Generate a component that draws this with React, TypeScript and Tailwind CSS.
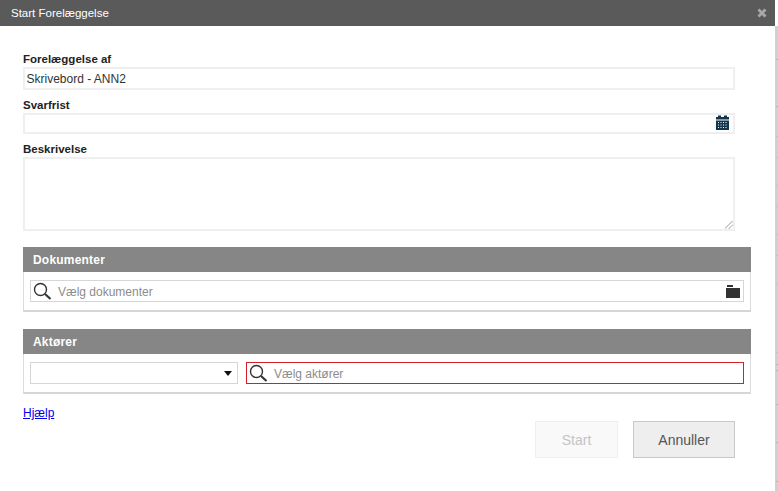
const TICKS: [number, boolean][] = [
  [59, true], [106, true], [136, false], [157, false], [185, false], [206, false], [234, false], [255, false],
  [283, false], [352, false], [364, true], [370, true], [404, true], [442, true], [481, true],
];

export default function App() {
  const font = "font-['Liberation_Sans',Arial,sans-serif]";
  const Search = () => (
    <svg width="19" height="19" viewBox="0 0 19 19" fill="none" className="shrink-0">
      <circle cx="7.500" cy="7.500" r="6" stroke="#333" strokeWidth="1.400" />
      <path d="M12 12l5.500 5" stroke="#333" strokeWidth="2.200" />
    </svg>
  );
  return (
    <div className={`flex h-[491px] w-[778px] overflow-hidden bg-white ${font}`}>
      <div className="flex w-[775px] flex-col">
        <div className="flex h-[26px] items-center justify-between bg-[#5a5a5a] pl-[11px] pr-[8px] text-[11.5px] text-white">
          <span className="mt-[1px]">Start Forelæggelse</span>
          <svg width="10" height="10" viewBox="0 0 10 10"><path d="M1.500 1.500l7 7M8.500 1.500l-7 7" stroke="#a8a8a8" strokeWidth="2.800" /></svg>
        </div>
        <div className="flex flex-col pl-[23px] pt-[24px]">
          <div className="flex h-[17px] items-center pt-[2px] text-[11.5px] font-bold leading-none text-[#222]">Forelæggelse af</div>
          <div className="flex h-[23px] w-[712px] items-center border-2 border-[#efefef] pl-[1.500px] text-[12px] text-[#333]">Skrivebord - ANN2</div>
          <div className="mt-[6px] flex h-[17px] items-center pt-[2px] text-[11.5px] font-bold leading-none text-[#222]">Svarfrist</div>
          <div className="flex h-[21px] w-[712px] items-center justify-end border-2 border-[#efefef] pr-[4px]">
            <svg width="13" height="15" viewBox="0 0 13 15" className="mt-[-2px]">
              <path d="M0 2h2V0.500h3V2h3V0.500h3V2h2v2.500H0z" fill="#12344d" />
              <path fillRule="evenodd" d="M0 5.500h13V15H0zM2 7v1h1V7zm2.500 0v1h1V7zm2.500 0v1h1V7zm2.500 0v1h1V7zM2 9.500v1h1v-1zm2.500 0v1h1v-1zm2.500 0v1h1v-1zm2.500 0v1h1v-1zM2 12v1h1v-1zm2.500 0v1h1v-1zm2.500 0v1h1v-1zm2.500 0v1h1v-1z" fill="#12344d" />
            </svg>
          </div>
          <div className="mt-[6px] flex h-[17px] items-center pt-[2px] text-[11.5px] font-bold leading-none text-[#222]">Beskrivelse</div>
          <div className="relative h-[74px] w-[712px] border-2 border-[#efefef]">
            <svg width="8" height="8" viewBox="0 0 8 8" className="absolute bottom-[0px] right-[0px]"><path d="M0 7.500L7.500 0M4 7.500L7.500 4" stroke="#555" strokeWidth="1" strokeDasharray="1 0.500" /></svg>
          </div>

          <div className="mt-[16px] flex h-[25px] w-[728px] items-center bg-[#868686] pl-[10px] text-[12px] font-bold tracking-[0.2px] text-white">Dokumenter</div>
          <div className="h-[40px] w-[728px] border-x border-b-[2px] border-x-[#dcdcdc] border-b-[#d6d6d6] pl-[6px] pt-[8px]">
            <div className="flex h-[22px] w-[714px] items-center border border-[#d6d6d6] pl-[2px] pr-[3px] text-[12px] text-[#8c8c8c]">
              <Search />
              <span className="ml-[6px] mt-[1px] flex-1">Vælg dokumenter</span>
              <svg width="14" height="13" viewBox="0 0 14 13"><path d="M1 0h6v2H1zM0 3h14v10H0z" fill="#333" /></svg>
            </div>
          </div>

          <div className="mt-[17px] flex h-[25px] w-[728px] items-center bg-[#868686] pl-[10px] text-[12px] font-bold tracking-[0.2px] text-white">Aktører</div>
          <div className="flex h-[40px] w-[728px] gap-[8px] border-x border-b-[2px] border-x-[#dcdcdc] border-b-[#d6d6d6] pl-[6px] pt-[8px]">
            <div className="flex h-[22px] w-[208px] items-center justify-end border border-[#d6d6d6] pr-[5px]">
              <svg width="8" height="5" viewBox="0 0 8 5"><path d="M0 0h8L4 5z" fill="#111" /></svg>
            </div>
            <div className="flex h-[22px] w-[498px] items-center border border-[#d2202a] pl-[2px] text-[12px] text-[#8c8c8c]">
              <Search />
              <span className="ml-[6px] mt-[1px]">Vælg aktører</span>
            </div>
          </div>

          <a href="#" className="mt-[11px] self-start text-[12px] leading-[17px] text-[#0000ee] underline">Hjælp</a>
          <div className="mt-[-1px] flex w-[712px] justify-end gap-[15px] text-[14px]">
            <div className="flex h-[37px] w-[83px] items-center justify-center border border-[#efefef] bg-[#f9f9f9] pt-[1px] text-[#c4c4c4]">Start</div>
            <div className="flex h-[37px] w-[102px] items-center justify-center border border-[#c8c8c8] bg-[#eeeeee] pt-[1px] text-[#555]">Annuller</div>
          </div>
        </div>
      </div>
      <div className="flex w-[3px] flex-col">
        <div className="h-[26px] bg-white" />
        <div className="relative flex-1 bg-[#d0d0d0]">
          {TICKS.map(([y, strong]) => (
            <div
              key={y}
              className={`absolute right-0 h-px w-[2px] ${strong ? "bg-[#b4b4b4]" : "bg-[#c4c4c4]"}`}
              style={{ top: y - 26 }}
            />
          ))}
        </div>
      </div>
    </div>
  );
}
